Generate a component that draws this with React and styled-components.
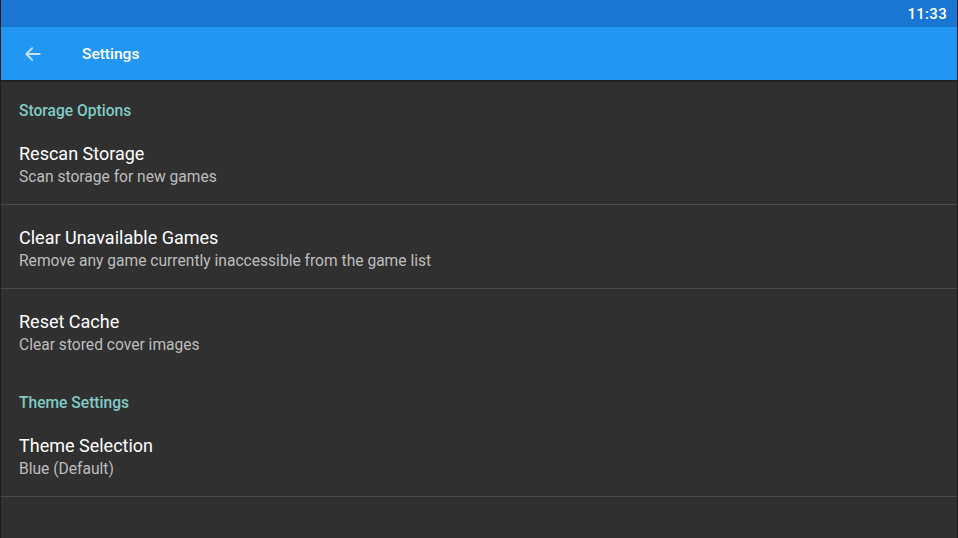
import React from "react";
import styled, { createGlobalStyle } from "styled-components";

const GlobalStyle = createGlobalStyle`
  html, body {
    margin: 0;
    padding: 0;
    background: #303030;
    font-family: Roboto, "Noto Sans", sans-serif;
  }
`;

const sections = [
  {
    title: "Storage Options",
    items: [
      { title: "Rescan Storage", summary: "Scan storage for new games", divider: true },
      {
        title: "Clear Unavailable Games",
        summary: "Remove any game currently inaccessible from the game list",
        divider: true,
      },
      { title: "Reset Cache", summary: "Clear stored cover images", divider: false },
    ],
  },
  {
    title: "Theme Settings",
    items: [{ title: "Theme Selection", summary: "Blue (Default)", divider: true }],
  },
];

export default function App() {
  return (
    <Screen>
      <GlobalStyle />
      <StatusBar>
        <Clock>11:33</Clock>
      </StatusBar>
      <Toolbar>
        <BackButton aria-label="Back">
          <svg width="20" height="20" viewBox="0 0 24 24" fill="none">
            <path
              d="M20 12H4M11 5l-7 7 7 7"
              stroke="currentColor"
              strokeWidth="2.2"
              strokeLinecap="round"
              strokeLinejoin="round"
            />
          </svg>
        </BackButton>
        <Title>Settings</Title>
      </Toolbar>
      <List>
        {sections.map((section) => (
          <section key={section.title}>
            <Category>{section.title}</Category>
            {section.items.map((item) => (
              <Item key={item.title} $divider={item.divider}>
                <ItemTitle>{item.title}</ItemTitle>
                <ItemSummary>{item.summary}</ItemSummary>
              </Item>
            ))}
          </section>
        ))}
      </List>
    </Screen>
  );
}

const Screen = styled.div`
  width: 958px;
  height: 538px;
  display: flex;
  flex-direction: column;
  background: #303030;
  overflow: hidden;
  box-sizing: border-box;
  border-left: 1px solid #1c1c1c;
  border-right: 1px solid #1c1c1c;
`;

const StatusBar = styled.div`
  height: 27px;
  background: #1976d2;
  display: flex;
  align-items: center;
  justify-content: flex-end;
  padding-right: 10px;
`;

const Clock = styled.span`
  color: #ffffff;
  font-size: 15px;
  font-weight: 500;
  letter-spacing: 0.3px;
`;

const Toolbar = styled.header`
  height: 53px;
  background: #2196f3;
  display: flex;
  align-items: center;
  padding-top: 1px;
  box-sizing: border-box;
  box-shadow: 0 1px 2px rgba(0, 0, 0, 0.5);
  position: relative;
  z-index: 1;
`;

const BackButton = styled.div`
  width: 24px;
  margin-left: 22px;
  display: flex;
  align-items: center;
  color: #c6e3fb;
`;

const Title = styled.h1`
  margin: 0 0 0 35px;
  color: #ffffff;
  font-size: 15.5px;
  font-weight: 500;
`;

const List = styled.div`
  flex: 1;
  padding-top: 1px;
`;

const Category = styled.div`
  padding: 21px 18px 1px;
  line-height: 18px;
  font-size: 15.6px;
  font-weight: 500;
  color: #80cbc4;
`;

const Item = styled.div`
  height: 84px;
  box-sizing: border-box;
  padding: 21px 18px 0;
  border-bottom: 1px solid ${(p) => (p.$divider ? "#4a4a4a" : "transparent")};
`;

const ItemTitle = styled.div`
  color: #ffffff;
  font-size: 18px;
  line-height: 24px;
`;

const ItemSummary = styled.div`
  color: #bdbdbd;
  font-size: 15.6px;
  line-height: 22px;
`;
